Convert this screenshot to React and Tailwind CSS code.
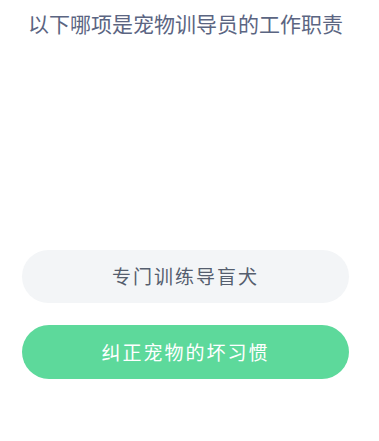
import React from "react";

export default function App() {
  const font = { fontFamily: '"Noto Sans CJK SC", "Noto Sans", sans-serif' };
  return (
    <div className="w-[379px] h-[441px] bg-white" style={font}>
      <div className="w-[371px] flex flex-col">
        <div className="pt-[8px] text-center text-[21px] leading-[30px] text-[#5b6582]">
          以下哪项是宠物训导员的工作职责
        </div>
        <div className="mt-[212px] px-[22px] flex flex-col gap-[22px]">
          <div className="h-[53px] rounded-full bg-[#f3f5f7] flex items-center justify-center text-[19px] tracking-[2px] text-[#555e6e]">
            专门训练导盲犬
          </div>
          <div className="h-[54px] rounded-full bg-[#5dd99b] flex items-center justify-center text-[19px] tracking-[2px] text-white">
            纠正宠物的坏习惯
          </div>
        </div>
      </div>
    </div>
  );
}
